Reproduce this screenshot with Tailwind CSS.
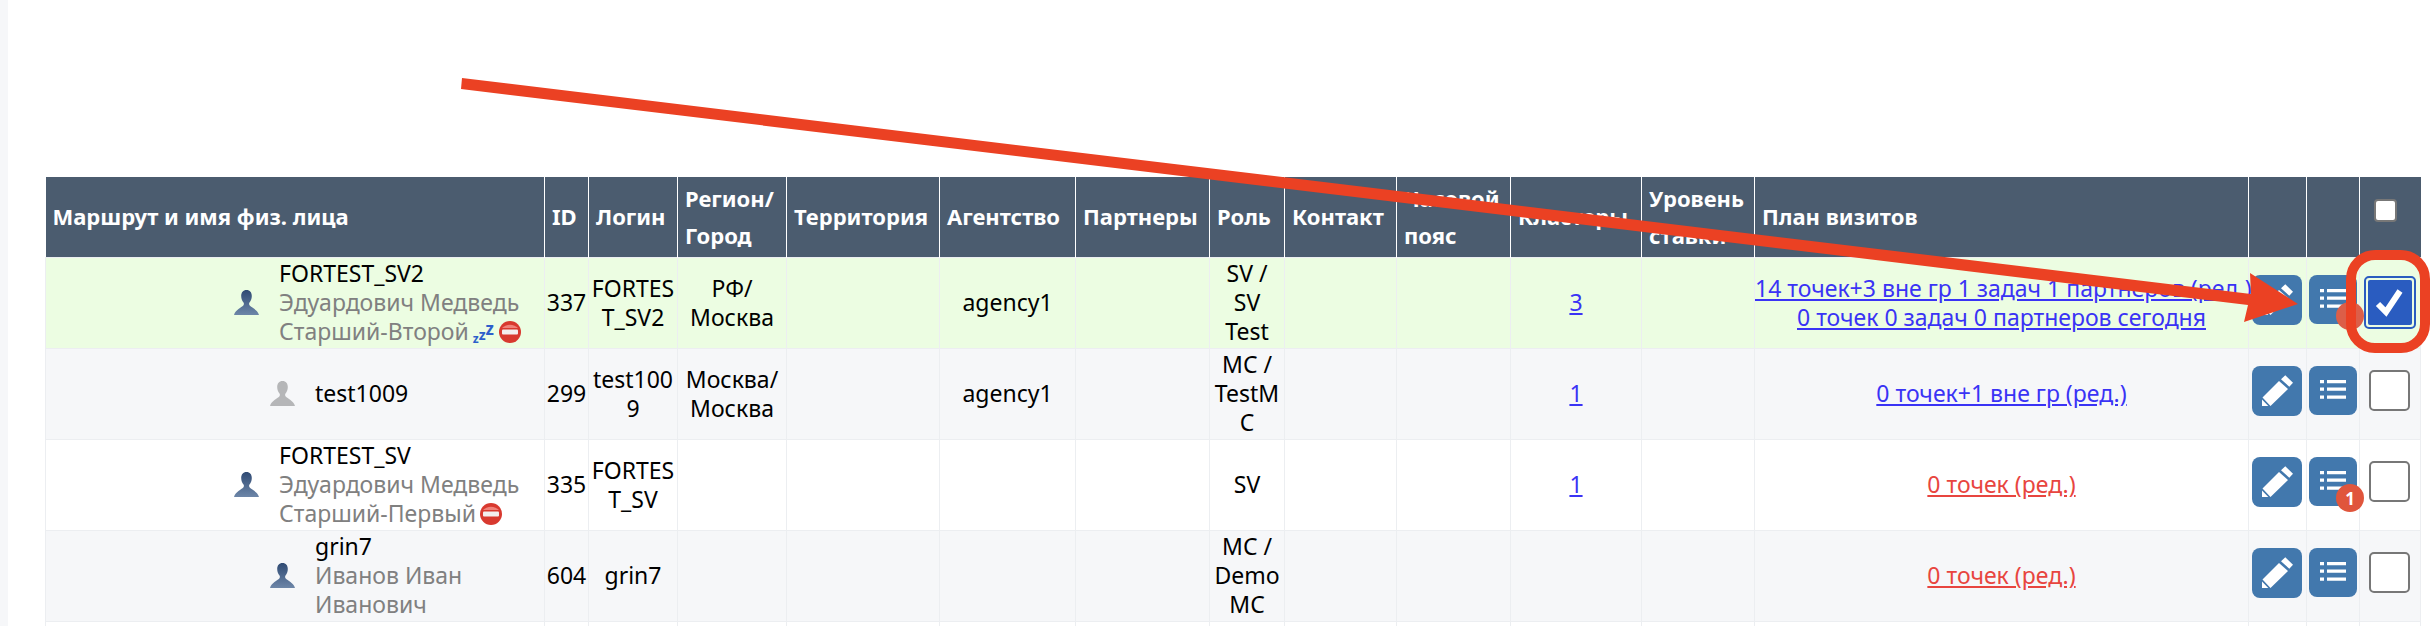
<!DOCTYPE html>
<html><head><meta charset="utf-8"><script src="https://cdn.jsdelivr.net/npm/@tailwindcss/browser@4"></script></head>
<body class="bg-white">
<svg width="0" height="0" class="absolute"><defs>
<linearGradient id="pd" x1="0" y1="0" x2="0" y2="1"><stop offset="0" stop-color="#2f4a73"/><stop offset="1" stop-color="#6d86a8"/></linearGradient>
<symbol id="person" viewBox="0 0 25 25"><path d="M12.500 0c-3.400 0-5.300 2.600-5.300 6 0 2.700 1 5 2.300 6.500.6.800.5 2.200-.2 3C7.500 17.600 1.500 19.500 0 25h25c-1.500-5.500-7.500-7.400-9.300-9.500-.7-.8-.8-2.200-.2-3 1.300-1.500 2.300-3.800 2.300-6.500 0-3.400-1.900-6-5.300-6z"/></symbol>
<symbol id="stop" viewBox="0 0 22 22"><circle cx="11" cy="11" r="11" fill="#d8392f"/><path d="M3 7a10 8 0 0 1 16 0z" fill="#f0827a"/><rect x="3" y="8.500" width="16" height="5" rx="1" fill="#f3eeee"/></symbol>
<symbol id="pencil" viewBox="0 0 50 50"><path fill="#fff" d="M33.300 9.300 41 16.700 37.300 20.700 29 13.300zM27 15l9 8-17.500 17-8-8.500zM10 33.500l6.300 6.500H10z"/></symbol>
<symbol id="list" viewBox="0 0 48 49"><path fill="#fff" d="M11 14h4v3.300h-4zM18 14h19v3.300H18zM11 21.500h4v3.300h-4zM18 21.500h19v3.300H18zM11 29.500h4v3.300h-4zM18 29.500h19v3.300H18z"/></symbol>
</defs></svg>
<div class="relative w-[2430px] h-[626px] overflow-hidden flex font-['Noto_Sans',sans-serif] text-[23px] leading-[29px] text-black">
<div class="w-2 h-full bg-[#f6f7f9] shrink-0"></div>
<div class="pl-[37px] pt-[177px]">
<table class="table-fixed border-collapse w-[2375px] [&_td]:border [&_td]:border-[#eceef1] [&_td]:text-center [&_td]:px-0 [&_td]:py-0">
<colgroup><col class="w-[499px]"><col class="w-[44px]"><col class="w-[89px]"><col class="w-[109px]"><col class="w-[153px]"><col class="w-[136px]"><col class="w-[134px]"><col class="w-[75px]"><col class="w-[112px]"><col class="w-[114px]"><col class="w-[131px]"><col class="w-[113px]"><col class="w-[494px]"><col class="w-[58px]"><col class="w-[53px]"><col class="w-[61px]"></colgroup>
<thead><tr class="h-[80px] bg-[#4b5c6f] text-white text-[22px] font-bold text-left leading-[37px] [&_th]:pl-[7px] [&_th]:pr-0 [&_th]:border-l [&_th]:border-white [&_th]:font-bold [&_th]:text-left [&_th]:whitespace-nowrap">
<th class="!border-l-0">Маршрут и имя физ. лица</th><th>ID</th><th>Логин</th><th>Регион/<br>Город</th><th>Территория</th><th>Агентство</th><th>Партнеры</th><th>Роль</th><th>Контакт</th><th>Часовой<br>пояс</th><th>Кластеры</th><th>Уровень<br>ставки</th><th>План визитов</th><th></th><th></th>
<th><span class="block w-[23px] h-[23px] ml-[7px] -mt-[12px] bg-white border-2 border-[#777] rounded-[4px]"></span></th></tr></thead>
<tbody>
<tr class="h-[91px] bg-[#ecfde2]">
<td><div class="flex items-center justify-end gap-5 pr-[21px] text-left"><svg class="w-[25px] h-[25px] -mt-[1px] fill-[url(#pd)]"><use href="#person"/></svg><div class="w-[244px] text-[#808080] whitespace-nowrap"><div class="text-black">FORTEST_SV2</div><div>Эдуардович Медведь</div><div class="flex items-center whitespace-nowrap">Старший-Второй<span class="ml-[4px] mr-[5px] shrink-0 inline-flex items-end h-[26px] text-[#2d5fcb] font-bold leading-none"><span class="text-[12px]">z</span><span class="text-[14px] mb-[3px]">z</span><span class="text-[17px] mb-[8px]">z</span></span><svg class="w-[22px] h-[22px] shrink-0"><use href="#stop"/></svg></div></div></div></td>
<td>337</td><td>FORTES<br>T_SV2</td><td>РФ/<br>Москва</td><td></td><td>agency1</td><td></td><td>SV /<br>SV<br>Test</td><td></td><td></td><td><a class="underline text-[#3a33f5]" href="#">3</a></td><td></td>
<td class="whitespace-nowrap"><a class="underline text-[#3a33f5]" href="#">14 точек+3 вне гр 1 задач 1 партнеров (ред.)</a><br><a class="underline text-[#3a33f5]" href="#">0 точек 0 задач 0 партнеров сегодня</a></td>
<td><span class="flex items-center justify-center w-[50px] h-[50px] ml-[3px] mb-[5px] bg-[#4278ad] rounded-lg"><svg class="w-[50px] h-[50px]"><use href="#pencil"/></svg></span></td>
<td><span class="relative flex items-center justify-center w-[48px] h-[49px] ml-[2px] mb-[6px] bg-[#4278ad] rounded-lg"><svg class="w-[48px] h-[49px]"><use href="#list"/></svg><span class="absolute left-[27px] top-[27px] w-[28px] h-[28px] rounded-full bg-[#dc5e48]"></span></span></td>
<td><span class="flex items-center justify-center w-[52px] h-[53px] ml-[4px] border-2 border-[#2a5cc0] rounded-[5px] bg-[#ecfde2]"><span class="flex items-center justify-center w-[44px] h-[45px] bg-[#2a5cc0] rounded-[2px]"><svg class="w-[32px] h-[32px]" viewBox="0 0 32 32"><path d="M4 17l8 8L26 4" fill="none" stroke="#fff" stroke-width="6"/></svg></span></span></td>
</tr>
<tr class="h-[91px] bg-[#f6f7f9]">
<td><div class="flex items-center justify-end gap-5 pr-[21px] text-left"><svg class="w-[25px] h-[25px] fill-[#b5b6b8]"><use href="#person"/></svg><div class="w-[208px]">test1009</div></div></td>
<td>299</td><td>test100<br>9</td><td>Москва/<br>Москва</td><td></td><td>agency1</td><td></td><td>MC /<br>TestM<br>C</td><td></td><td></td><td><a class="underline text-[#3a33f5]" href="#">1</a></td><td></td>
<td><a class="underline text-[#3a33f5]" href="#">0 точек+1 вне гр (ред.)</a></td>
<td><span class="flex items-center justify-center w-[50px] h-[50px] ml-[3px] mb-[5px] bg-[#4278ad] rounded-lg"><svg class="w-[50px] h-[50px]"><use href="#pencil"/></svg></span></td>
<td><span class="flex items-center justify-center w-[48px] h-[49px] ml-[2px] mb-[6px] bg-[#4278ad] rounded-lg"><svg class="w-[48px] h-[49px]"><use href="#list"/></svg></span></td>
<td><span class="block w-[41px] h-[41px] ml-[9px] mb-[7px] bg-white border-2 border-[#777] rounded-[5px]"></span></td>
</tr>
<tr class="h-[91px] bg-white">
<td><div class="flex items-center justify-end gap-5 pr-[21px] text-left"><svg class="w-[25px] h-[25px] -mt-[1px] fill-[url(#pd)]"><use href="#person"/></svg><div class="w-[244px] text-[#808080] whitespace-nowrap"><div class="text-black">FORTEST_SV</div><div>Эдуардович Медведь</div><div class="flex items-center whitespace-nowrap">Старший-Первый<svg class="ml-[4px] w-[22px] h-[22px] shrink-0"><use href="#stop"/></svg></div></div></div></td>
<td>335</td><td>FORTES<br>T_SV</td><td></td><td></td><td></td><td></td><td>SV</td><td></td><td></td><td><a class="underline text-[#3a33f5]" href="#">1</a></td><td></td>
<td><a class="underline text-[#e8453f]" href="#">0 точек (ред.)</a></td>
<td><span class="flex items-center justify-center w-[50px] h-[50px] ml-[3px] mb-[5px] bg-[#4278ad] rounded-lg"><svg class="w-[50px] h-[50px]"><use href="#pencil"/></svg></span></td>
<td><span class="relative flex items-center justify-center w-[48px] h-[49px] ml-[2px] mb-[6px] bg-[#4278ad] rounded-lg"><svg class="w-[48px] h-[49px]"><use href="#list"/></svg><span class="absolute left-[27px] top-[27px] flex items-center justify-center w-[28px] h-[28px] rounded-full bg-[#e0553c] text-white font-bold text-[17px] leading-none">1</span></span></td>
<td><span class="block w-[41px] h-[41px] ml-[9px] mb-[7px] bg-white border-2 border-[#777] rounded-[5px]"></span></td>
</tr>
<tr class="h-[91px] bg-[#f6f7f9]">
<td><div class="flex items-center justify-end gap-5 pr-[21px] text-left"><svg class="w-[25px] h-[25px] fill-[url(#pd)]"><use href="#person"/></svg><div class="w-[208px] text-[#808080]"><div class="text-black">grin7</div><div>Иванов Иван Иванович</div></div></div></td>
<td>604</td><td>grin7</td><td></td><td></td><td></td><td></td><td>MC /<br>Demo<br>MC</td><td></td><td></td><td></td><td></td>
<td><a class="underline text-[#e8453f]" href="#">0 точек (ред.)</a></td>
<td><span class="flex items-center justify-center w-[50px] h-[50px] ml-[3px] mb-[5px] bg-[#4278ad] rounded-lg"><svg class="w-[50px] h-[50px]"><use href="#pencil"/></svg></span></td>
<td><span class="flex items-center justify-center w-[48px] h-[49px] ml-[2px] mb-[6px] bg-[#4278ad] rounded-lg"><svg class="w-[48px] h-[49px]"><use href="#list"/></svg></span></td>
<td><span class="block w-[41px] h-[41px] ml-[9px] mb-[7px] bg-white border-2 border-[#777] rounded-[5px]"></span></td>
</tr>
<tr class="h-[20px]"><td></td><td></td><td></td><td></td><td></td><td></td><td></td><td></td><td></td><td></td><td></td><td></td><td></td><td></td><td></td><td></td></tr>
</tbody></table>
</div>
<svg class="absolute inset-0 pointer-events-none" width="2430" height="626" viewBox="0 0 2430 626">
<polygon fill="#eb4123" points="462,78 2251,294 2250,273 2298,304 2244,322 2248,305 461,89"/>
<rect x="2351" y="255" width="74" height="93" rx="24" fill="none" stroke="#eb4123" stroke-width="10"/>
</svg>
</div>
</body></html>
